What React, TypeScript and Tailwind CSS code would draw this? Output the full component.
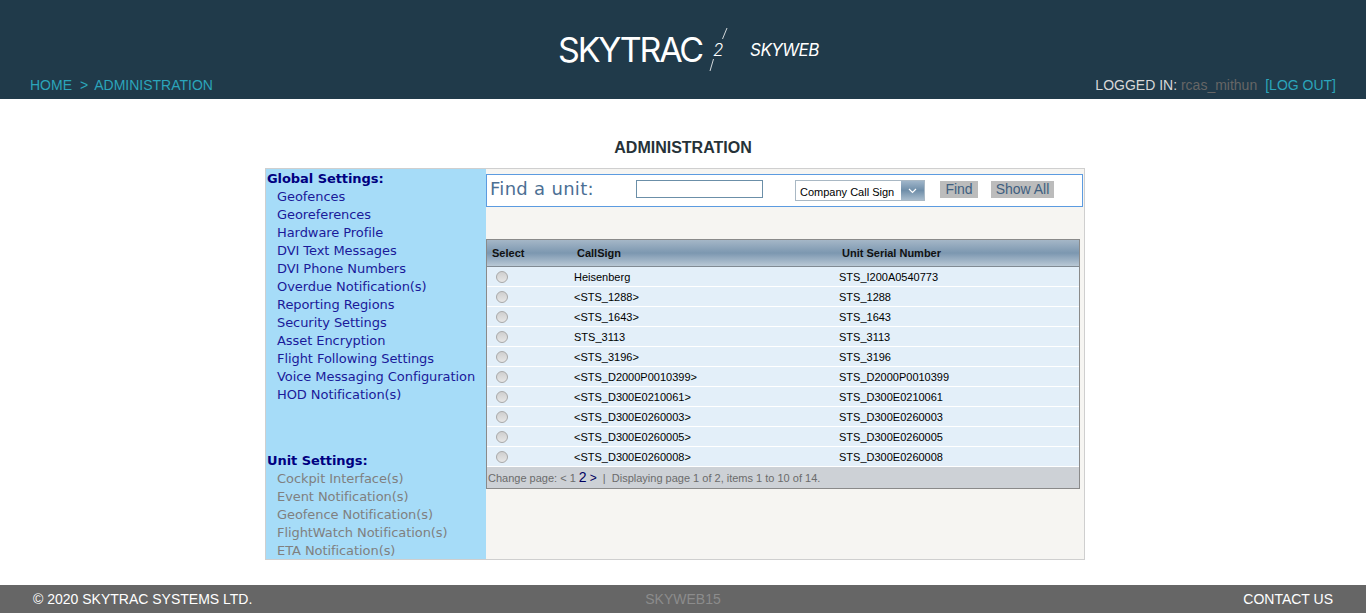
const arial = "font-['Liberation_Sans',Arial,sans-serif]"

const globalLinks = [
  "Geofences",
  "Georeferences",
  "Hardware Profile",
  "DVI Text Messages",
  "DVI Phone Numbers",
  "Overdue Notification(s)",
  "Reporting Regions",
  "Security Settings",
  "Asset Encryption",
  "Flight Following Settings",
  "Voice Messaging Configuration",
  "HOD Notification(s)",
]

const unitLinks = [
  "Cockpit Interface(s)",
  "Event Notification(s)",
  "Geofence Notification(s)",
  "FlightWatch Notification(s)",
  "ETA Notification(s)",
]

const units = [
  ["Heisenberg", "STS_I200A0540773"],
  ["<STS_1288>", "STS_1288"],
  ["<STS_1643>", "STS_1643"],
  ["STS_3113", "STS_3113"],
  ["<STS_3196>", "STS_3196"],
  ["<STS_D2000P0010399>", "STS_D2000P0010399"],
  ["<STS_D300E0210061>", "STS_D300E0210061"],
  ["<STS_D300E0260003>", "STS_D300E0260003"],
  ["<STS_D300E0260005>", "STS_D300E0260005"],
  ["<STS_D300E0260008>", "STS_D300E0260008"],
]

function Logo() {
  return (
    <div className="flex items-start h-[42px] text-white font-['Inter',sans-serif]">
      <span className="w-[150px] font-normal text-[34px] leading-[44px] tracking-[-2.2px] whitespace-nowrap">SKYTRAC</span>
      <div className="relative w-[24px] h-[44px]">
        <svg width="24" height="44" viewBox="0 0 24 44" className="absolute left-0 top-0">
          <path d="M19 0 L14.5 11 M5.5 31 L2 43" stroke="#fff" strokeWidth="0.8" fill="none" />
        </svg>
        <span className="absolute left-[5px] top-[11px] italic font-light text-[17px] leading-[22px]">2</span>
      </div>
      <span className="ml-[18px] italic font-normal text-[17px] leading-[44px] tracking-[-0.5px] whitespace-nowrap">SKYWEB</span>
    </div>
  )
}

function Header() {
  return (
    <header className={`h-[99px] bg-[#203a4a] flex flex-col ${arial}`}>
      <div className="h-[76px] pt-[28px] flex justify-center pl-[11px]">
        <Logo />
      </div>
      <div className="flex justify-between px-[30px] text-[14px] leading-[18px]">
        <div className="text-[#2ba5bb] flex">
          <span>HOME</span>
          <span className="ml-[8px] mr-[6px]">&gt;</span>
          <span>ADMINISTRATION</span>
        </div>
        <div className="text-[#d8d8d8]">
          LOGGED IN: <span className="text-[#666666]">rcas_mithun</span>
          <span className="text-[#2ba5bb] ml-[8px]">[LOG OUT]</span>
        </div>
      </div>
    </header>
  )
}

function Sidebar() {
  return (
    <nav className="w-[220px] shrink-0 bg-[#a6dcf8] pl-[1px] pt-[1px] font-['DejaVu_Sans',Verdana,sans-serif] text-[13px] leading-[18px] tracking-[-0.07px]">
      <div className="font-bold text-[#000080]">Global Settings:</div>
      {globalLinks.map((l) => (
        <div key={l} className="pl-[10px] text-[#1a1a9a]">{l}</div>
      ))}
      <div className="font-bold text-[#000080] mt-[48px]">Unit Settings:</div>
      {unitLinks.map((l) => (
        <div key={l} className="pl-[10px] text-[#808080]">{l}</div>
      ))}
    </nav>
  )
}

function FindBar() {
  return (
    <div className="mt-[5px] w-[597px] h-[33px] border border-[#5c9be0] bg-white flex items-start pl-[3px]">
      <span className="font-['DejaVu_Sans',Verdana,sans-serif] text-[18px] leading-[27px] tracking-[0.3px] text-[#4c6f94] w-[146px]">Find a unit:</span>
      <input className="mt-[5px] w-[127px] h-[18px] border border-[#6b8fa8] bg-white" />
      <div className={`ml-[32px] mt-[5px] w-[130px] h-[21px] flex border border-[#a9b8c4] ${arial} text-[11px]`}>
        <span className="flex-1 pl-[4px] leading-[22px] text-black bg-white">Company Call Sign</span>
        <span className="w-[23px] bg-gradient-to-b from-[#9fb5c9] via-[#6f8ea9] to-[#a8bccd] flex items-center justify-center">
          <svg width="9" height="6" viewBox="0 0 9 6">
            <path d="M1 1 L4.5 4.5 L8 1" stroke="#fff" strokeWidth="1.2" fill="none" />
          </svg>
        </span>
      </div>
      <span className={`ml-[15px] mt-[6px] w-[38px] h-[17px] bg-[#bcbcbc] text-center text-[#3f5f80] ${arial} text-[14px] leading-[17px]`}>Find</span>
      <span className={`ml-[13px] mt-[6px] w-[63px] h-[17px] bg-[#bcbcbc] text-center text-[#3f5f80] ${arial} text-[14px] leading-[17px]`}>Show All</span>
    </div>
  )
}

function UnitTable() {
  return (
    <div className={`mt-[32px] w-[594px] border border-[#8a8a8a] ${arial} text-[11px]`}>
      <div className="h-[27px] pt-[1px] flex items-center font-bold text-[11px] text-[#111] bg-gradient-to-b from-[#a5b7c7] via-[#7c97b0] to-[#b9c8d5] border-b border-[#808a93]">
        <span className="w-[85px] ml-[5px]">Select</span>
        <span className="w-[265px]">CallSign</span>
        <span>Unit Serial Number</span>
      </div>
      {units.map(([sign, serial]) => (
        <div key={serial} className="h-[20px] flex items-center bg-[#e3eff9] border-b border-white text-black">
          <span className="w-[87px] pl-[9px] flex">
            <span className="w-[12px] h-[12px] rounded-full border border-[#a8a8a8] bg-gradient-to-b from-[#cfcfcf] to-[#e6e6e6]" />
          </span>
          <span className="w-[265px] pt-[1px]">{sign}</span>
          <span className="pt-[1px]">{serial}</span>
        </div>
      ))}
      <div className="h-[21px] bg-[#cdd1d6] text-[#6b6b6b] pl-[1px] leading-[21px] text-[11px] whitespace-pre">
        Change page: &lt; 1 <span className="text-[#000060] text-[14px]">2</span> <span className="text-[#000060] text-[12px]">&gt;</span>  |  Displaying page 1 of 2, items 1 to 10 of 14.
      </div>
    </div>
  )
}

function Footer() {
  return (
    <footer className={`h-[28px] bg-[#666666] flex items-center justify-between pl-[33px] pr-[33px] text-[14px] ${arial}`}>
      <span className="text-white w-[300px]">© 2020 SKYTRAC SYSTEMS LTD.</span>
      <span className="text-[#8c8c8c]">SKYWEB15</span>
      <span className="text-white w-[300px] text-right">CONTACT US</span>
    </footer>
  )
}

export default function App() {
  return (
    <div className="w-[1366px] h-[613px] flex flex-col bg-white overflow-hidden">
      <Header />
      <main className="flex-1 flex flex-col items-center">
        <h1 className={`mt-[39px] text-[16px] leading-[20px] font-bold text-[#263238] ${arial}`}>ADMINISTRATION</h1>
        <div className="mt-[10px] mr-[16px] w-[820px] h-[392px] border border-[#cfcfcf] bg-[#f6f5f2] flex">
          <Sidebar />
          <div className="flex-1">
            <FindBar />
            <UnitTable />
          </div>
        </div>
      </main>
      <Footer />
    </div>
  )
}
